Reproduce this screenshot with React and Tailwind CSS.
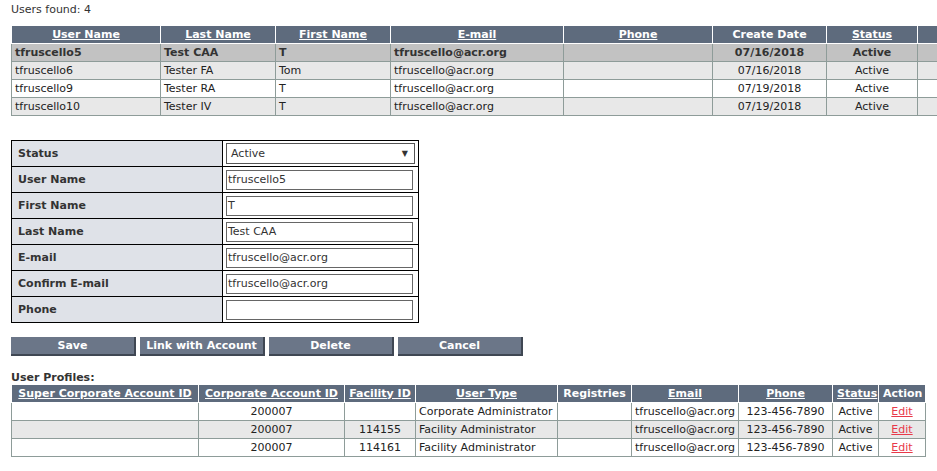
import React from 'react'

const users = [
  { user: 'tfruscello5', last: 'Test CAA', first: 'T', email: 'tfruscello@acr.org', date: '07/16/2018', status: 'Active', selected: true },
  { user: 'tfruscello6', last: 'Tester FA', first: 'Tom', email: 'tfruscello@acr.org', date: '07/16/2018', status: 'Active' },
  { user: 'tfruscello9', last: 'Tester RA', first: 'T', email: 'tfruscello@acr.org', date: '07/19/2018', status: 'Active' },
  { user: 'tfruscello10', last: 'Tester IV', first: 'T', email: 'tfruscello@acr.org', date: '07/19/2018', status: 'Active' },
]

const profiles = [
  { corp: '200007', facility: '', type: 'Corporate Administrator' },
  { corp: '200007', facility: '114155', type: 'Facility Administrator' },
  { corp: '200007', facility: '114161', type: 'Facility Administrator' },
]

const fields = [
  { label: 'User Name', value: 'tfruscello5' },
  { label: 'First Name', value: 'T' },
  { label: 'Last Name', value: 'Test CAA' },
  { label: 'E-mail', value: 'tfruscello@acr.org' },
  { label: 'Confirm E-mail', value: 'tfruscello@acr.org' },
  { label: 'Phone', value: '' },
]

const th = 'p-0 px-1 border border-white bg-[#5e6b7d] text-white font-bold text-center whitespace-nowrap leading-[17px]'
const td = 'p-0 px-[3px] border border-[#8e9c99] whitespace-nowrap leading-[17px]'

const Button = ({ children }) => (
  <button className="w-[125px] h-[19px] bg-[#6b7688] text-white font-bold border-r-2 border-b-2 border-[#3f4753] leading-none">
    {children}
  </button>
)

export default function App() {
  return (
    <div className="w-[937px] h-[471px] overflow-hidden bg-white text-[#222] text-[11px] leading-[18px]" style={{ fontFamily: '"DejaVu Sans", Verdana, sans-serif' }}>
      <div className="pl-[11px] pt-[1px]">
        <div className="text-[#333] h-[18px]">Users found: 4</div>

        <table className="mt-[6px] border-collapse table-fixed w-[1000px] border border-[#8e9c99]">
          <colgroup>
            <col className="w-[149px]" />
            <col className="w-[115px]" />
            <col className="w-[115px]" />
            <col className="w-[173px]" />
            <col className="w-[149px]" />
            <col className="w-[114px]" />
            <col className="w-[91px]" />
            <col />
          </colgroup>
          <thead>
            <tr>
              <th className={th}><span className="underline">User Name</span></th>
              <th className={th}><span className="underline">Last Name</span></th>
              <th className={th}><span className="underline">First Name</span></th>
              <th className={th}><span className="underline">E-mail</span></th>
              <th className={th}><span className="underline">Phone</span></th>
              <th className={th}>Create Date</th>
              <th className={th}><span className="underline">Status</span></th>
              <th className={th}></th>
            </tr>
          </thead>
          <tbody>
            {users.map((u, i) => {
              const bg = u.selected ? 'bg-[#c2c2c2] font-bold text-[#333]' : i % 2 === 1 ? 'bg-[#e8e8e8]' : 'bg-white'
              return (
                <tr key={u.user} className={bg}>
                  <td className={td}>{u.user}</td>
                  <td className={td}>{u.last}</td>
                  <td className={td}>{u.first}</td>
                  <td className={td}>{u.email}</td>
                  <td className={td}></td>
                  <td className={td + ' text-center'}>{u.date}</td>
                  <td className={td + ' text-center'}>{u.status}</td>
                  <td className={td}></td>
                </tr>
              )
            })}
          </tbody>
        </table>

        <table className="mt-[24px] border-collapse table-fixed w-[408px] border border-black">
          <colgroup>
            <col className="w-[211px]" />
            <col />
          </colgroup>
          <tbody>
            <tr className="h-[26px]">
              <td className="border border-black bg-[#dfe2e8] font-bold text-[#333] pl-[6px]">Status</td>
              <td className="border border-black px-[3px]">
                <div className="flex items-center justify-between h-[21px] w-[189px] border border-[#555] bg-white pl-[4px] pr-[6px] text-[#333]">
                  <span>Active</span>
                  <span className="text-[8px]">▼</span>
                </div>
              </td>
            </tr>
            {fields.map((f) => (
              <tr key={f.label} className="h-[26px]">
                <td className="border border-black bg-[#dfe2e8] font-bold text-[#333] pl-[6px]">{f.label}</td>
                <td className="border border-black px-[3px]">
                  <div className="h-[20px] w-[187px] border border-[#666] bg-white pl-[1px] text-[#333] leading-[18px]">{f.value}</div>
                </td>
              </tr>
            ))}
          </tbody>
        </table>

        <div className="flex gap-[4px] mt-[14px]">
          <Button>Save</Button>
          <Button>Link with Account</Button>
          <Button>Delete</Button>
          <Button>Cancel</Button>
        </div>

        <div className="mt-[15px] font-bold text-[#333] leading-[13px]">User Profiles:</div>

        <table className="border-collapse table-fixed w-[914px] border border-[#8e9c99]">
          <colgroup>
            <col className="w-[187px]" />
            <col className="w-[146px]" />
            <col className="w-[71px]" />
            <col className="w-[142px]" />
            <col className="w-[74px]" />
            <col className="w-[107px]" />
            <col className="w-[94px]" />
            <col className="w-[46px]" />
            <col className="w-[47px]" />
          </colgroup>
          <thead>
            <tr>
              <th className={th}><span className="underline">Super Corporate Account ID</span></th>
              <th className={th}><span className="underline">Corporate Account ID</span></th>
              <th className={th}><span className="underline">Facility ID</span></th>
              <th className={th}><span className="underline">User Type</span></th>
              <th className={th}>Registries</th>
              <th className={th}><span className="underline">Email</span></th>
              <th className={th}><span className="underline">Phone</span></th>
              <th className={th}><span className="underline">Status</span></th>
              <th className={th}>Action</th>
            </tr>
          </thead>
          <tbody>
            {profiles.map((p, i) => (
              <tr key={i} className={i % 2 === 1 ? 'bg-[#e8e8e8]' : 'bg-white'}>
                <td className={td}></td>
                <td className={td + ' text-center'}>{p.corp}</td>
                <td className={td + ' text-right pr-[14px]'}>{p.facility}</td>
                <td className={td}>{p.type}</td>
                <td className={td}></td>
                <td className={td + ' text-center'}>tfruscello@acr.org</td>
                <td className={td + ' text-center'}>123-456-7890</td>
                <td className={td + ' text-center'}>Active</td>
                <td className={td + ' text-center'}><a className="text-[#e8394a] underline">Edit</a></td>
              </tr>
            ))}
          </tbody>
        </table>
      </div>
    </div>
  )
}
